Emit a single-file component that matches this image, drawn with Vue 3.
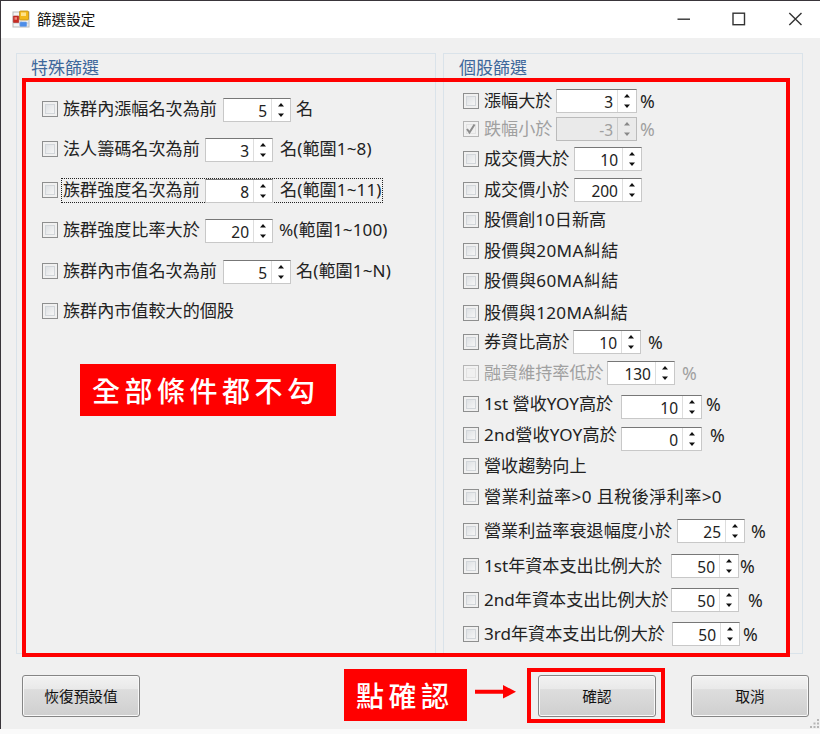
<script setup>
// label: space reserved for the caption, gap: space before the unit, top: space above the row
const special = [
  { text: '族群內漲幅名次為前', label: 160, value: 5, gap: 5, unit: '名', top: 0 },
  { text: '法人籌碼名次為前', label: 142, value: 3, gap: 7, unit: '名(範圍1~8)', top: 16 },
  { text: '族群強度名次為前', label: 142, value: 8, gap: 7, unit: '名(範圍1~11)', top: 17, focused: true },
  { text: '族群強度比率大於', label: 142, value: 20, gap: 6, unit: '%(範圍1~100)', top: 16 },
  { text: '族群內市值名次為前', label: 160, value: 5, gap: 5, unit: '名(範圍1~N)', top: 17 },
  { text: '族群內市值較大的個股', top: 16 },
]
const stock = [
  { text: '漲幅大於', label: 72, value: 3, wide: true, gap: 3, unit: '%', top: 0 },
  { text: '跌幅小於', label: 72, value: -3, wide: true, gap: 3, unit: '%', top: 4, disabled: true, checked: true, locked: true },
  { text: '成交價大於', label: 90, value: 10, top: 6 },
  { text: '成交價小於', label: 90, value: 200, top: 7 },
  { text: '股價創10日新高', top: 6 },
  { text: '股價與20MA糾結', top: 7, track: 0.35 },
  { text: '股價與60MA糾結', top: 6, track: 0.35 },
  { text: '股價與120MA糾結', top: 8, track: 0.3 },
  { text: '券資比高於', label: 89, value: 10, gap: 7, unit: '%', top: 5 },
  { text: '融資維持率低於', label: 123, value: 130, gap: 7, unit: '%', top: 7, disabled: true },
  { text: '1st 營收YOY高於', label: 137, value: 10, wide: true, gap: 4, unit: '%', top: 7, drop: 6 },
  { text: '2nd營收YOY高於', label: 137, value: 0, wide: true, gap: 8, unit: '%', top: 7, drop: 7, track: 0.15 },
  { text: '營收趨勢向上', top: 7 },
  { text: '營業利益率>0 且稅後淨利率>0', top: 7, track: 0.4 },
  { text: '營業利益率衰退幅度小於', label: 193, value: 25, gap: 6, unit: '%', top: 10 },
  { text: '1st年資本支出比例大於', label: 187, value: 50, gap: 1, unit: '%', top: 11 },
  { text: '2nd年資本支出比例大於', label: 187, value: 50, gap: 9, unit: '%', top: 10 },
  { text: '3rd年資本支出比例大於', label: 188, value: 50, gap: 3, unit: '%', top: 10 },
]
const groups = [
  { title: '特殊篩選', rows: special, kind: 'special' },
  { title: '個股篩選', rows: stock, kind: 'stock' },
]
const labelStyle = (r) => ({
  width: r.label ? r.label + 'px' : undefined,
  letterSpacing: r.track ? r.track + 'px' : undefined,
})
</script>

<template>
  <div class="window">
    <header class="titlebar">
      <svg class="app-icon" width="18" height="18" viewBox="0 0 18 18">
        <rect x="1" y="2" width="16" height="15" fill="#f4f4f4" stroke="#b9b9b9" />
        <path d="M9 11v6M1 13h16" stroke="#ccc" />
        <rect x="1.300" y="6" width="5.500" height="6.500" rx=".5" fill="#c92b22" stroke="#a22" stroke-width=".6" />
        <rect x="2.500" y="7.200" width="2.500" height="2.500" fill="#ee8b80" />
        <rect x="7.500" y="1" width="9" height="9" rx="1" fill="#f3b81b" stroke="#b98a1a" stroke-width=".8" />
        <rect x="9" y="2.500" width="5" height="3.500" fill="#ffe28a" />
        <rect x="7.800" y="12" width="7" height="4.500" rx="1" fill="#4d8de8" stroke="#79a5e2" stroke-width=".6" />
      </svg>
      <h1>篩選設定</h1>
      <svg class="controls" width="128" height="14" viewBox="0 0 128 14" fill="none" stroke="#333" stroke-width="1.4">
        <path d="M0.500 7.200H13" />
        <rect x="56" y="1.200" width="11.500" height="11.500" />
        <path d="M112.300 1L124.500 13M124.500 1L112.300 13" />
      </svg>
    </header>

    <main class="groups">
      <section v-for="g in groups" :key="g.kind" class="group" :class="g.kind">
        <h2>{{ g.title }}</h2>
        <div
          v-for="r in g.rows"
          :key="r.text"
          class="row"
          :class="{ disabled: r.disabled, focused: r.focused }"
          :style="{ marginTop: r.top + 'px' }"
        >
          <span class="check">
            <svg v-if="r.checked" width="12" height="12" viewBox="0 0 12 12"><path d="M2 6l2.500 3.500L9.500 1.500" fill="none" stroke="#8d8d8d" stroke-width="2" /></svg>
          </span>
          <span class="label" :style="labelStyle(r)">{{ r.text }}</span>
          <span
            v-if="r.value !== undefined"
            class="spinner"
            :class="{ wide: r.wide, locked: r.locked }"
            :style="r.drop ? { marginTop: r.drop + 'px' } : null"
          >
            <span class="value">{{ r.value }}</span>
            <span class="arrows">
              <svg width="8" height="16" viewBox="0 0 8 16" fill="currentColor"><path d="M1 4.500L4 1L7 4.500ZM1 11.500L4 15L7 11.500Z" /></svg>
            </span>
          </span>
          <span v-if="r.unit" class="unit" :style="{ marginLeft: r.gap + 'px' }">{{ r.unit }}</span>
        </div>
      </section>
    </main>

    <footer class="actions">
      <button class="reset">恢復預設值</button>
      <button>確認</button>
      <button>取消</button>
    </footer>

    <div class="frame frame-filters"></div>
    <div class="frame frame-confirm"></div>
    <div class="callout callout-filters">全部條件都不勾</div>
    <div class="callout callout-confirm">點確認</div>
    <svg class="pointer" width="42" height="16" viewBox="0 0 42 16" fill="#f00"><path d="M0 5.800H28V1L41 7.800L28 14.600V9.800H0Z" /></svg>
    <svg class="grip" width="10" height="10" viewBox="0 0 10 10" fill="#b5b5b5"><path d="M7 0h2v2H7zM3.500 3.500h2v2h-2zM7 3.500h2v2H7zM0 7h2v2H0zM3.500 7h2v2h-2zM7 7h2v2H7z" /></svg>
  </div>
</template>

<style>
body {
  margin: 0;
  background: #fafafa;
}
</style>

<style scoped>
.window {
  position: relative;
  box-sizing: border-box;
  width: 820px;
  height: 729px;
  border-top: 1px solid #39353a;
  border-left: 1px solid #39353a;
  background: #f0f0f0;
  font-family: 'Noto Sans', 'Noto Sans CJK TC', sans-serif;
  color: #222;
  overflow: hidden;
}
.titlebar {
  display: flex;
  align-items: center;
  box-sizing: border-box;
  height: 37px;
  padding: 0 15px 2px 11px;
  background: #fff;
}
h1 {
  margin: 0 auto 0 7px;
  font: 400 14.600px/20px 'Noto Sans CJK TC', sans-serif;
  color: #111;
}
.groups {
  display: flex;
  gap: 7px;
  padding: 15px 17px 0 15px;
}
.group {
  box-sizing: border-box;
  height: 601px;
  border: 1px solid #dae3ea;
}
.special {
  width: 420px;
  padding-left: 25px;
}
.stock {
  width: 360px;
  padding-left: 19px;
}
h2 {
  margin: 2px 0 0 -11px;
  font: 400 17px/22px 'Noto Sans CJK TC', sans-serif;
  color: #3e679b;
}
.stock h2 {
  margin-left: -4px;
}
.special h2 {
  margin-bottom: 19px;
}
.stock h2 {
  margin-bottom: 11px;
}
.row {
  position: relative;
  display: flex;
  align-items: center;
  height: 24px;
  font-size: 17.100px;
  line-height: 24px;
  white-space: nowrap;
}
.check {
  display: flex;
  align-items: center;
  justify-content: center;
  flex: none;
  box-sizing: border-box;
  width: 16px;
  height: 16px;
  margin-right: 5px;
  border: 1px solid #8e8f8f;
  background: linear-gradient(135deg, #d6dade, #f6f6f6 80%);
  box-shadow: inset 0 0 0 2px #f0f0f0, inset 0 0 0 3px #d2d6da;
}
.disabled .check {
  border-color: #b5b5b5;
  background: #f0f0f0;
  box-shadow: inset 0 0 0 2px #f2f2f2, inset 0 0 0 3px #e2e2e2;
}
.label {
  flex: none;
}
.unit {
  letter-spacing: 0.100px;
}
.stock .unit {
  font-size: 17.800px;
}
.disabled .label,
.disabled .unit {
  color: #a0a0a0;
}
.spinner {
  position: relative;
  display: flex;
  flex: none;
  box-sizing: border-box;
  width: 68px;
  height: 24px;
  border: 1px solid #c8c8c8;
  border-top: 1px solid #777;
  background: #fff;
  top: 1px;
}
.stock .spinner {
  top: 0;
}
.wide {
  width: 81px;
}
.value {
  flex: 1;
  padding: 1px 4px 0 0;
  font-size: 15.500px;
  line-height: 23px;
  text-align: right;
}
.arrows {
  display: flex;
  align-items: center;
  justify-content: center;
  width: 18px;
  border-left: 1px solid #ddd;
  color: #111;
}
.locked {
  background: #eaeaea;
  border-color: #bbb;
  color: #a0a0a0;
}
.locked .arrows {
  color: #888;
  border-color: #ccc;
}
.focused::before {
  content: '';
  position: absolute;
  left: 19px;
  top: 0;
  width: 320px;
  height: 23px;
  border: 1px dotted #222;
}
.actions {
  display: flex;
  padding: 21px 0 0 21px;
}
button {
  flex: none;
  box-sizing: border-box;
  width: 118px;
  height: 42px;
  margin-right: 35px;
  padding: 0;
  border: 1px solid #858585;
  border-radius: 3px;
  background: linear-gradient(#f2f2f2 0, #e9e9e9 32%, #dddddd 34%, #cfcfcf 100%);
  box-shadow: inset 0 0 0 1px #f8f8f8;
  font: 400 14.700px/20px 'Noto Sans CJK TC', sans-serif;
  color: #111;
}
.reset {
  margin-right: 398px;
}
.frame {
  position: absolute;
  box-sizing: border-box;
  border: 4px solid #f00;
}
.frame-filters {
  left: 21px;
  top: 77px;
  width: 768px;
  height: 579px;
}
.frame-confirm {
  left: 526px;
  top: 667px;
  width: 138px;
  height: 55px;
}
.callout {
  position: absolute;
  box-sizing: border-box;
  height: 52px;
  background: #f00;
  color: #fff;
  font: 500 28px/53px DFKai-SB, BiauKai, KaiTi, 'Noto Sans CJK TC', serif;
  letter-spacing: 4.500px;
  padding-left: 12px;
  white-space: nowrap;
}
.callout-filters {
  left: 79px;
  top: 363px;
  width: 256px;
}
.callout-confirm {
  left: 343px;
  top: 668px;
  width: 123px;
}
.pointer {
  position: absolute;
  left: 474px;
  top: 683px;
}
.grip {
  position: absolute;
  right: 0;
  bottom: 0;
}
</style>
